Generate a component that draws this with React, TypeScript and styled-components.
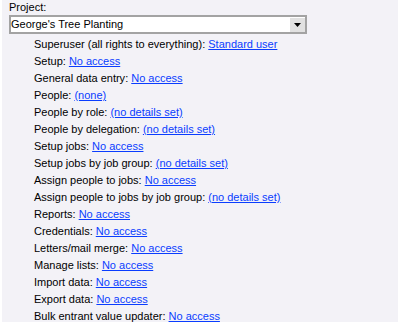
import styled, { createGlobalStyle } from 'styled-components'

const GlobalStyle = createGlobalStyle`
  html, body {
    margin: 0;
    padding: 0;
    background: #f3f2f7;
  }
`

const Page = styled.div`
  width: 399px;
  height: 322px;
  box-sizing: border-box;
  background: #f3f2f7;
  border-left: 2px solid #ffffff;
  border-right: 1px solid #ffffff;
  padding: 1px 0 0 7px;
  font-family: Tahoma, 'Liberation Sans', Arial, sans-serif;
  font-size: 11px;
  color: #000;
  overflow: hidden;
`

const Label = styled.div`
  line-height: 13px;
  height: 13px;
`

const Select = styled.div`
  margin-top: 1px;
  width: 298px;
  height: 19px;
  box-sizing: border-box;
  background: #fff;
  border: 2px solid #a3a3a3;
  display: flex;
  align-items: center;
  justify-content: space-between;
  padding: 0;
`

const SelectText = styled.span`
  line-height: 15px;
`

const DropButton = styled.span`
  width: 15px;
  height: 14px;
  background: #e1e1e1;
  display: flex;
  align-items: center;
  justify-content: center;
`

const List = styled.div`
  padding: 2px 0 0 25px;
  display: flex;
  flex-direction: column;
`

const Row = styled.div`
  line-height: 17px;
  height: 17px;
  white-space: nowrap;
`

const Link = styled.a`
  color: #0a3dff;
  text-decoration: underline;
  cursor: pointer;
`

const rows: [string, string][] = [
  ['Superuser (all rights to everything)', 'Standard user'],
  ['Setup', 'No access'],
  ['General data entry', 'No access'],
  ['People', '(none)'],
  ['People by role', '(no details set)'],
  ['People by delegation', '(no details set)'],
  ['Setup jobs', 'No access'],
  ['Setup jobs by job group', '(no details set)'],
  ['Assign people to jobs', 'No access'],
  ['Assign people to jobs by job group', '(no details set)'],
  ['Reports', 'No access'],
  ['Credentials', 'No access'],
  ['Letters/mail merge', 'No access'],
  ['Manage lists', 'No access'],
  ['Import data', 'No access'],
  ['Export data', 'No access'],
  ['Bulk entrant value updater', 'No access'],
]

export default function App() {
  return (
    <Page>
      <GlobalStyle />
      <Label>Project:</Label>
      <Select>
        <SelectText>George's Tree Planting</SelectText>
        <DropButton>
          <svg width="7" height="4" viewBox="0 0 7 4">
            <path d="M0 0h7L3.5 4z" fill="#000" />
          </svg>
        </DropButton>
      </Select>
      <List>
        {rows.map(([name, value]) => (
          <Row key={name}>
            {name}: <Link>{value}</Link>
          </Row>
        ))}
      </List>
    </Page>
  )
}
